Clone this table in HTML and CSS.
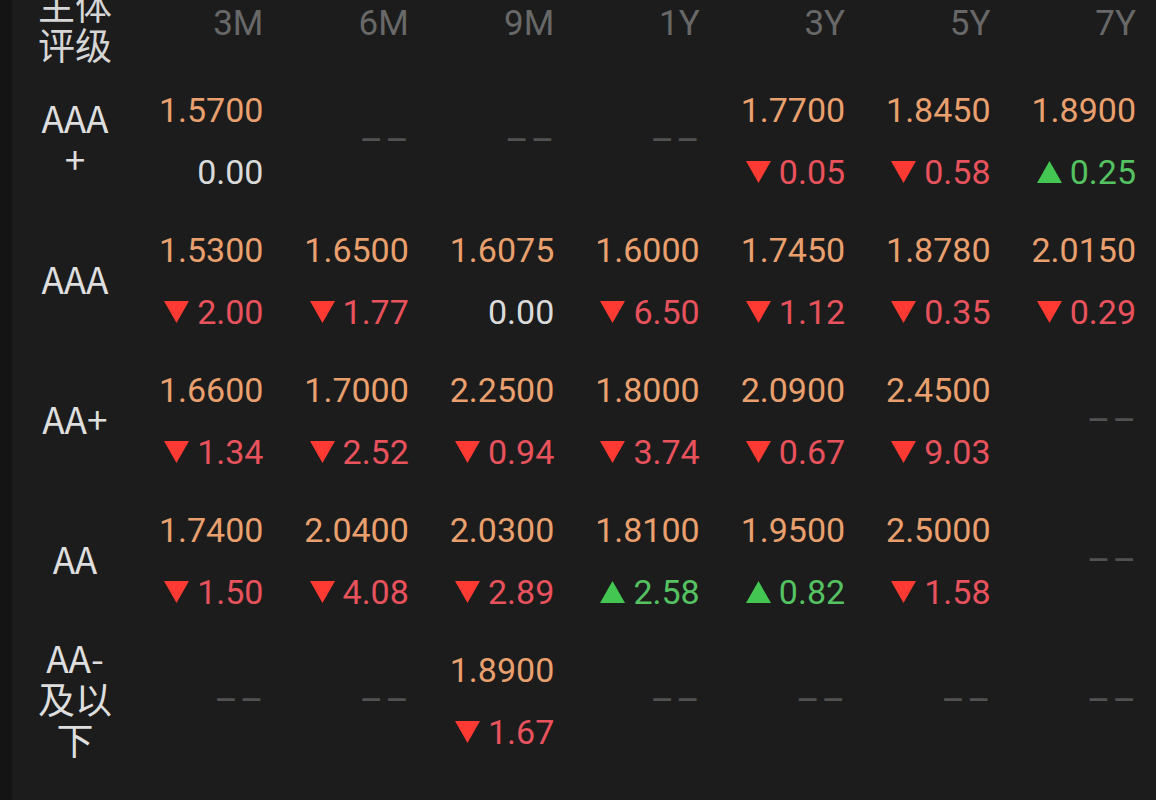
FILE: index.html
```html
<!DOCTYPE html>
<html lang="zh-CN">
<head>
<meta charset="utf-8">
<title>主体评级</title>
<link rel="stylesheet" href="styles.css">
</head>
<body>
<div class="page">
  <div class="table">
    <div class="row head">
      <div class="label">主体<br>评级</div>
      <div class="hcell">3M</div>
      <div class="hcell">6M</div>
      <div class="hcell">9M</div>
      <div class="hcell">1Y</div>
      <div class="hcell">3Y</div>
      <div class="hcell">5Y</div>
      <div class="hcell">7Y</div>
    </div>

    <div class="row">
      <div class="label">AAA<br>+</div>
      <div class="cell"><span class="val">1.5700</span><span class="chg flat">0.00</span></div>
      <div class="cell"><span class="dash">––</span></div>
      <div class="cell"><span class="dash">––</span></div>
      <div class="cell"><span class="dash">––</span></div>
      <div class="cell"><span class="val">1.7700</span><span class="chg down"><svg class="tri" viewBox="0 0 25 22"><polygon points="0,0 25,0 12.5,22"/></svg>0.05</span></div>
      <div class="cell"><span class="val">1.8450</span><span class="chg down"><svg class="tri" viewBox="0 0 25 22"><polygon points="0,0 25,0 12.5,22"/></svg>0.58</span></div>
      <div class="cell"><span class="val">1.8900</span><span class="chg up"><svg class="tri" viewBox="0 0 25 22"><polygon points="12.5,0 25,22 0,22"/></svg>0.25</span></div>
    </div>

    <div class="row">
      <div class="label">AAA</div>
      <div class="cell"><span class="val">1.5300</span><span class="chg down"><svg class="tri" viewBox="0 0 25 22"><polygon points="0,0 25,0 12.5,22"/></svg>2.00</span></div>
      <div class="cell"><span class="val">1.6500</span><span class="chg down"><svg class="tri" viewBox="0 0 25 22"><polygon points="0,0 25,0 12.5,22"/></svg>1.77</span></div>
      <div class="cell"><span class="val">1.6075</span><span class="chg flat">0.00</span></div>
      <div class="cell"><span class="val">1.6000</span><span class="chg down"><svg class="tri" viewBox="0 0 25 22"><polygon points="0,0 25,0 12.5,22"/></svg>6.50</span></div>
      <div class="cell"><span class="val">1.7450</span><span class="chg down"><svg class="tri" viewBox="0 0 25 22"><polygon points="0,0 25,0 12.5,22"/></svg>1.12</span></div>
      <div class="cell"><span class="val">1.8780</span><span class="chg down"><svg class="tri" viewBox="0 0 25 22"><polygon points="0,0 25,0 12.5,22"/></svg>0.35</span></div>
      <div class="cell"><span class="val">2.0150</span><span class="chg down"><svg class="tri" viewBox="0 0 25 22"><polygon points="0,0 25,0 12.5,22"/></svg>0.29</span></div>
    </div>

    <div class="row">
      <div class="label">AA+</div>
      <div class="cell"><span class="val">1.6600</span><span class="chg down"><svg class="tri" viewBox="0 0 25 22"><polygon points="0,0 25,0 12.5,22"/></svg>1.34</span></div>
      <div class="cell"><span class="val">1.7000</span><span class="chg down"><svg class="tri" viewBox="0 0 25 22"><polygon points="0,0 25,0 12.5,22"/></svg>2.52</span></div>
      <div class="cell"><span class="val">2.2500</span><span class="chg down"><svg class="tri" viewBox="0 0 25 22"><polygon points="0,0 25,0 12.5,22"/></svg>0.94</span></div>
      <div class="cell"><span class="val">1.8000</span><span class="chg down"><svg class="tri" viewBox="0 0 25 22"><polygon points="0,0 25,0 12.5,22"/></svg>3.74</span></div>
      <div class="cell"><span class="val">2.0900</span><span class="chg down"><svg class="tri" viewBox="0 0 25 22"><polygon points="0,0 25,0 12.5,22"/></svg>0.67</span></div>
      <div class="cell"><span class="val">2.4500</span><span class="chg down"><svg class="tri" viewBox="0 0 25 22"><polygon points="0,0 25,0 12.5,22"/></svg>9.03</span></div>
      <div class="cell"><span class="dash">––</span></div>
    </div>

    <div class="row">
      <div class="label">AA</div>
      <div class="cell"><span class="val">1.7400</span><span class="chg down"><svg class="tri" viewBox="0 0 25 22"><polygon points="0,0 25,0 12.5,22"/></svg>1.50</span></div>
      <div class="cell"><span class="val">2.0400</span><span class="chg down"><svg class="tri" viewBox="0 0 25 22"><polygon points="0,0 25,0 12.5,22"/></svg>4.08</span></div>
      <div class="cell"><span class="val">2.0300</span><span class="chg down"><svg class="tri" viewBox="0 0 25 22"><polygon points="0,0 25,0 12.5,22"/></svg>2.89</span></div>
      <div class="cell"><span class="val">1.8100</span><span class="chg up"><svg class="tri" viewBox="0 0 25 22"><polygon points="12.5,0 25,22 0,22"/></svg>2.58</span></div>
      <div class="cell"><span class="val">1.9500</span><span class="chg up"><svg class="tri" viewBox="0 0 25 22"><polygon points="12.5,0 25,22 0,22"/></svg>0.82</span></div>
      <div class="cell"><span class="val">2.5000</span><span class="chg down"><svg class="tri" viewBox="0 0 25 22"><polygon points="0,0 25,0 12.5,22"/></svg>1.58</span></div>
      <div class="cell"><span class="dash">––</span></div>
    </div>

    <div class="row">
      <div class="label">AA-<br>及以<br>下</div>
      <div class="cell"><span class="dash">––</span></div>
      <div class="cell"><span class="dash">––</span></div>
      <div class="cell"><span class="val">1.8900</span><span class="chg down"><svg class="tri" viewBox="0 0 25 22"><polygon points="0,0 25,0 12.5,22"/></svg>1.67</span></div>
      <div class="cell"><span class="dash">––</span></div>
      <div class="cell"><span class="dash">––</span></div>
      <div class="cell"><span class="dash">––</span></div>
      <div class="cell"><span class="dash">––</span></div>
    </div>
  </div>
</div>
</body>
</html>
```

FILE: styles.css
```css
html, body {
  margin: 0;
  padding: 0;
  background: #141414;
  height: 100%;
  overflow: hidden;
}

.page {
  margin-left: 12px;
  background: #1c1c1c;
  height: 800px;
  padding-right: 20px;
  font-family: Roboto, "Noto Sans CJK SC", sans-serif;
}

.table {
  display: flex;
  flex-direction: column;
}

.row {
  display: grid;
  grid-template-columns: 106px repeat(7, 1fr);
  grid-template-rows: 140px;
  height: 140px;
  align-items: center;
}

.row.head {
  grid-template-rows: 47px;
  height: 47px;
  padding-bottom: 24px;
}

.label {
  padding-left: 20px;
  padding-bottom: 6px;
  text-align: center;
  font-family: "Noto Sans CJK SC", sans-serif;
  font-size: 37px;
  line-height: 41px;
  color: #dedede;
}

.head .label {
  line-height: 40px;
  padding-bottom: 0;
  color: #d6d6d6;
}

.hcell {
  text-align: right;
  font-size: 35px;
  line-height: 40px;
  color: #686868;
}

.cell {
  display: flex;
  flex-direction: column;
  align-items: flex-end;
  justify-content: center;
  font-size: 34px;
  line-height: 62px;
}

.val {
  color: #e9a06e;
}

.chg {
  display: flex;
  align-items: center;
  gap: 8px;
}

.chg.flat {
  color: #dadada;
}

.chg.down {
  color: #e8525c;
}

.chg.up {
  color: #55c262;
}

.tri {
  width: 25px;
  height: 22px;
  display: block;
}

.down .tri {
  fill: #ff3a32;
}

.up .tri {
  fill: #43c652;
}

.dash {
  color: #525252;
  font-size: 36px;
  letter-spacing: 2px;
  margin-right: -2px;
  line-height: 62px;
}
```
